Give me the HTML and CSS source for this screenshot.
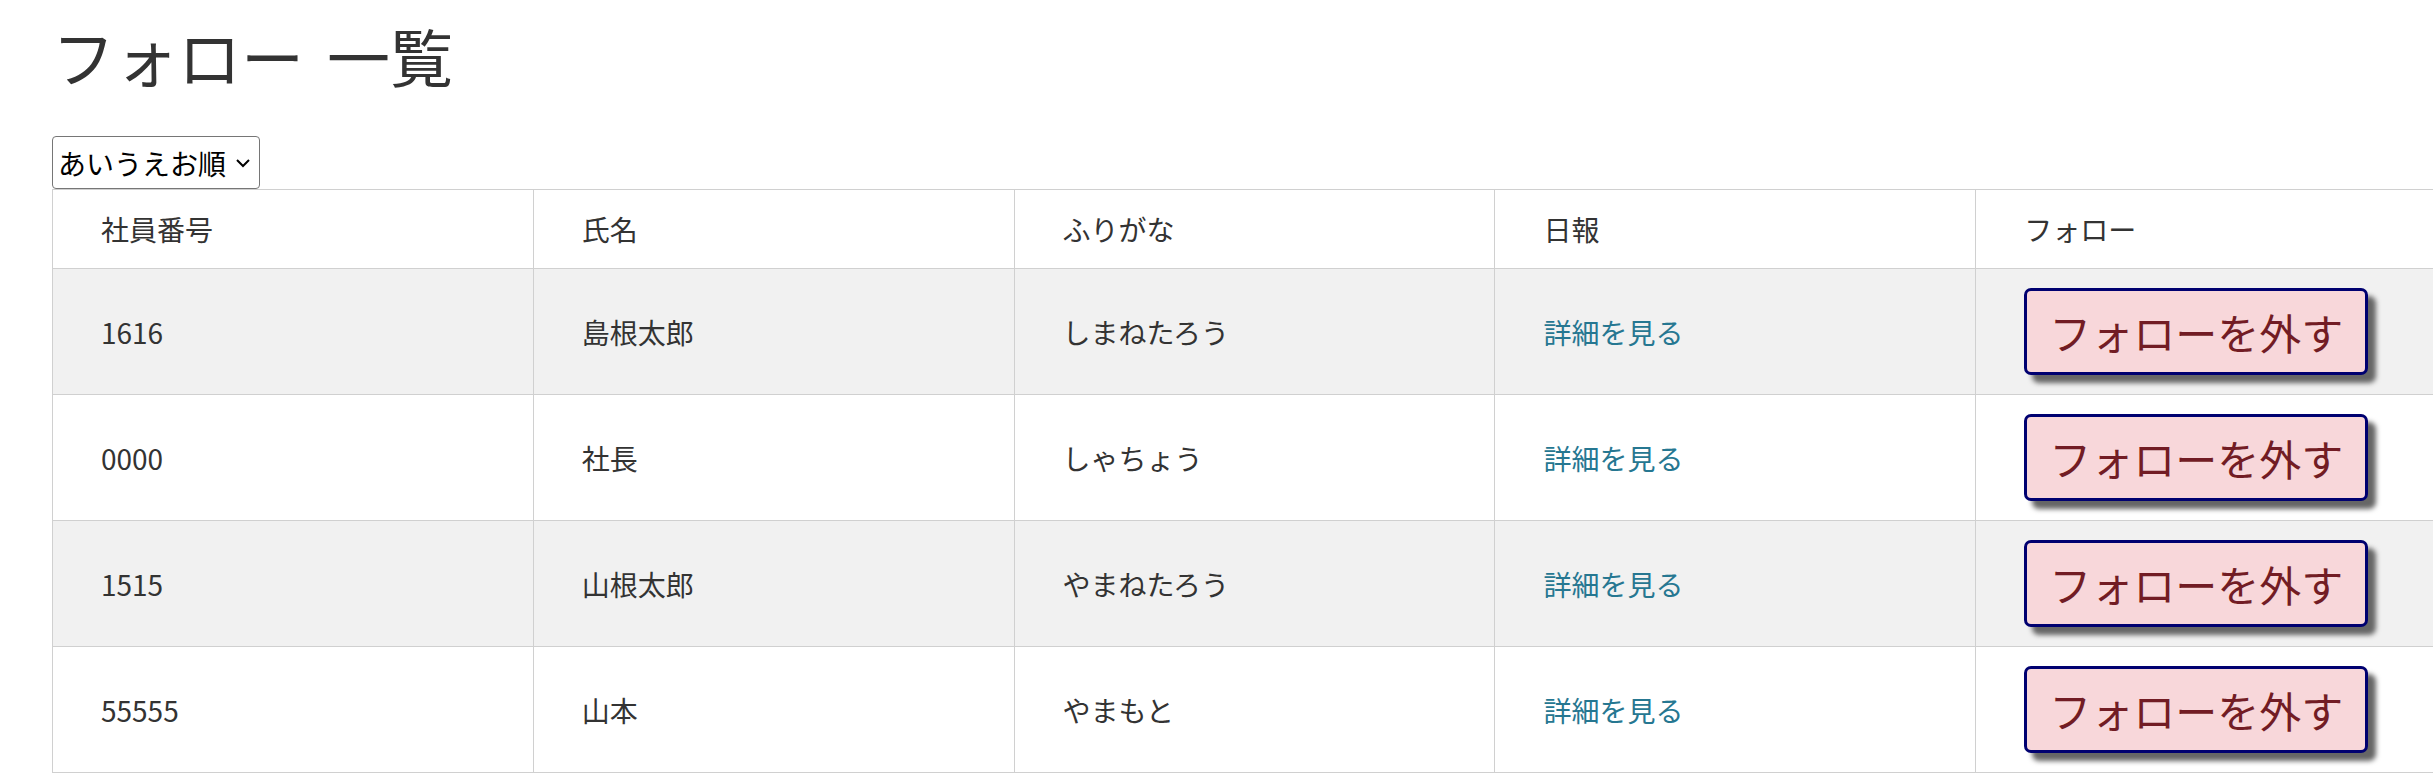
FILE: index.html
```html
<!DOCTYPE html>
<html lang="ja">
<head>
<meta charset="utf-8">
<title>フォロー 一覧</title>
<link rel="stylesheet" href="styles.css">
</head>
<body>
<main class="page">
  <h1 class="title">フォロー 一覧</h1>
  <select class="sort">
    <option>あいうえお順</option>
    <option>社員番号順</option>
  </select>
  <div class="table-wrap">
    <table class="follow-table">
      <thead>
        <tr>
          <th>社員番号</th>
          <th>氏名</th>
          <th>ふりがな</th>
          <th>日報</th>
          <th>フォロー</th>
        </tr>
      </thead>
      <tbody>
        <tr>
          <td>1616</td>
          <td>島根太郎</td>
          <td>しまねたろう</td>
          <td><a class="detail-link" href="#">詳細を見る</a></td>
          <td><button class="unfollow-btn" type="button">フォローを外す</button></td>
        </tr>
        <tr>
          <td>0000</td>
          <td>社長</td>
          <td>しゃちょう</td>
          <td><a class="detail-link" href="#">詳細を見る</a></td>
          <td><button class="unfollow-btn" type="button">フォローを外す</button></td>
        </tr>
        <tr>
          <td>1515</td>
          <td>山根太郎</td>
          <td>やまねたろう</td>
          <td><a class="detail-link" href="#">詳細を見る</a></td>
          <td><button class="unfollow-btn" type="button">フォローを外す</button></td>
        </tr>
        <tr>
          <td>55555</td>
          <td>山本</td>
          <td>やまもと</td>
          <td><a class="detail-link" href="#">詳細を見る</a></td>
          <td><button class="unfollow-btn" type="button">フォローを外す</button></td>
        </tr>
      </tbody>
    </table>
  </div>
</main>
</body>
</html>
```

FILE: styles.css
```css
html, body {
  margin: 0;
  padding: 0;
  overflow: hidden;
  background: #fff;
}

body {
  font-family: "Noto Sans CJK JP", "Noto Sans", sans-serif;
  color: #333;
}

.page {
  padding-left: 52px;
}

.title {
  font-size: 63px;
  font-weight: 400;
  line-height: 73px;
  word-spacing: 9px;
  margin: 18px 0 45px;
  color: #333;
}

.sort {
  display: block;
  width: 208px;
  height: 53px;
  margin: 0;
  padding: 0 30px 0 5px;
  font-family: inherit;
  font-size: 28px;
  color: #000;
  border: 1px solid #767676;
  border-radius: 4px;
  -webkit-appearance: none;
  appearance: none;
  background-color: #fff;
  background-image: url("data:image/svg+xml,%3Csvg xmlns='http://www.w3.org/2000/svg' width='16' height='10' viewBox='0 0 16 10'%3E%3Cpath d='M2 2l6 6 6-6' fill='none' stroke='%23000' stroke-width='2'/%3E%3C/svg%3E");
  background-repeat: no-repeat;
  background-position: right 8px center;
  background-size: 16px 10px;
}

.table-wrap {
  width: 2405px;
}

.follow-table {
  width: 2405px;
  table-layout: fixed;
  border-collapse: collapse;
  font-size: 28px;
  line-height: 40px;
}

.follow-table th,
.follow-table td {
  border: 1px solid #d0d0d0;
  padding: 19px 48px;
  text-align: left;
  font-weight: 400;
  vertical-align: middle;
}

.follow-table tbody tr:nth-child(odd) {
  background: #f1f1f1;
}

.detail-link {
  color: #267791;
  text-decoration: none;
}

.unfollow-btn {
  display: inline-block;
  font-family: inherit;
  font-size: 42px;
  line-height: 61px;
  padding: 10px 22px;
  border: 3px solid #000070;
  border-radius: 7px;
  background: #f8d7da;
  color: #721c24;
  box-shadow: 8px 8px 5px #666;
  cursor: pointer;
}
```
